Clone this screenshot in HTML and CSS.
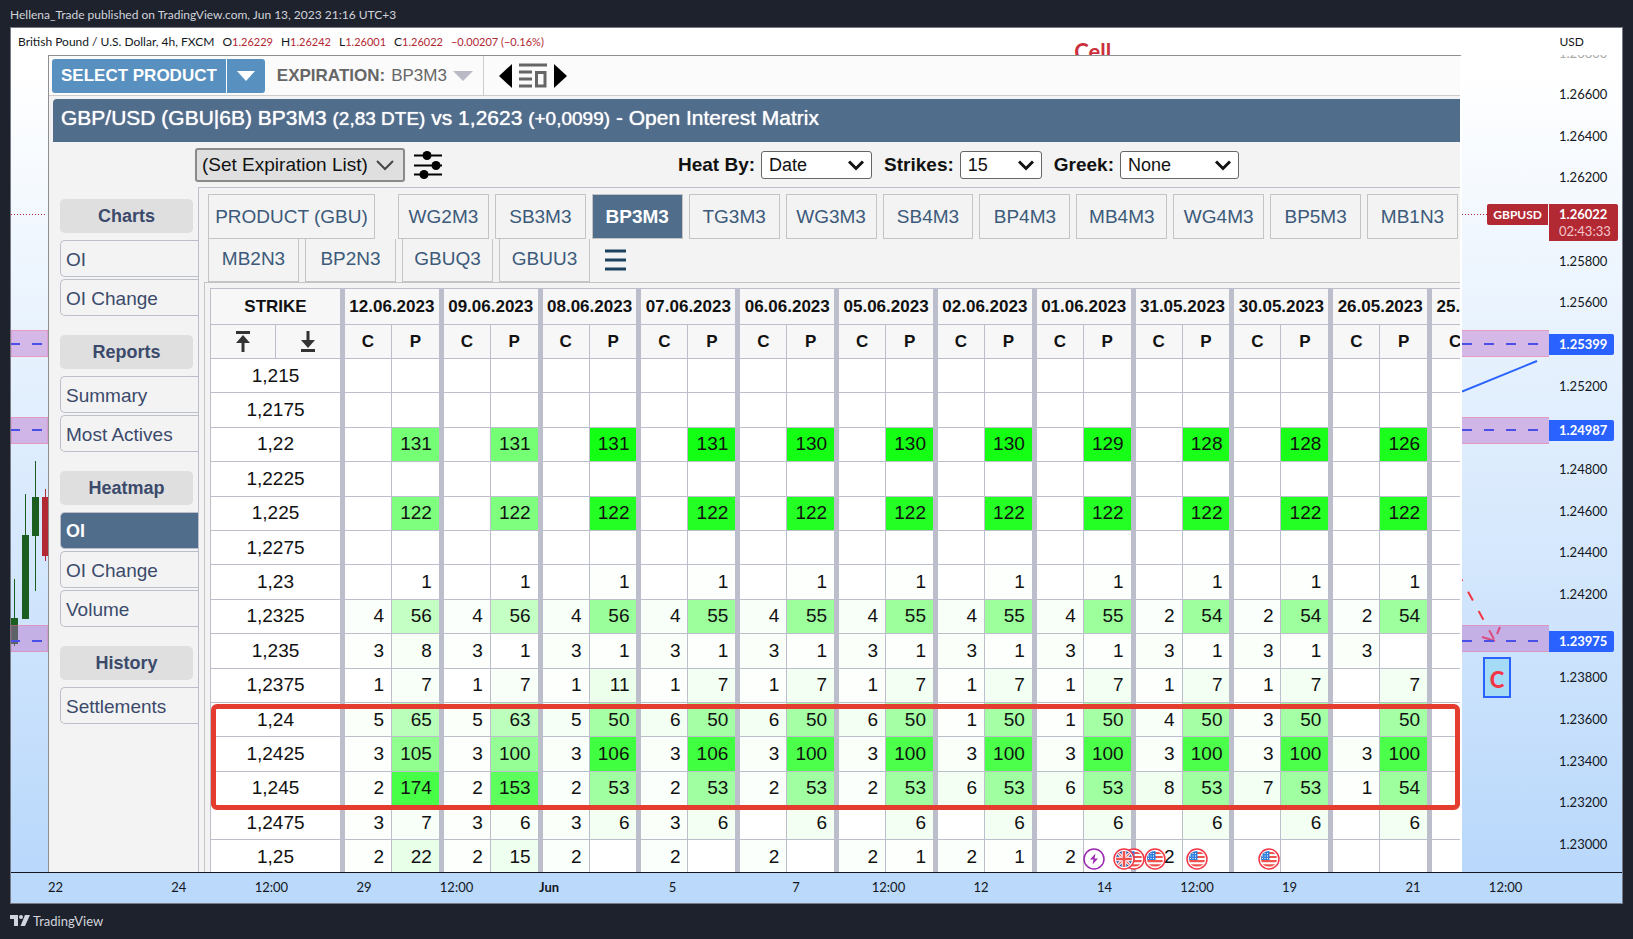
FILE: index.html
```
<!DOCTYPE html>
<html lang="en">
<head>
    <meta charset="UTF-8">
    <meta name="viewport" content="width=device-width, initial-scale=1.0">
    <title>GBPUSD - Open Interest Matrix</title>
    <link rel="stylesheet" href="styles.css">
</head>
<body>
    <!-- shared icons -->
    <svg class="sprite" aria-hidden="true">
        <symbol id="chevron" viewBox="0 0 16 12"><path d="M1 2.5 8 9.5 15 2.5" fill="none" stroke="currentColor" stroke-width="3"/></symbol>
        <symbol id="us" viewBox="0 0 22 22">
            <circle cx="11" cy="11" r="10" fill="#fff" stroke="#f23645" stroke-width="1.5"/>
            <clipPath id="disc"><circle cx="11" cy="11" r="8"/></clipPath>
            <g clip-path="url(#disc)">
                <path d="M2 5h18M2 9h18M2 13.2h18M2 17.4h18" stroke="#ef5350" stroke-width="2.2"/>
                <path d="M2 2h9.500v10H2z" fill="#2f7fe0"/>
                <path d="M4 5.500h7M4 8h7M4 10.500h7" stroke="#fff" stroke-width="1" stroke-dasharray="1 1.500"/>
            </g>
        </symbol>
        <symbol id="uk" viewBox="0 0 22 22">
            <circle cx="11" cy="11" r="10" fill="#fff" stroke="#f23645" stroke-width="1.5"/>
            <g clip-path="url(#disc)">
                <path d="M2 2h18v18H2z" fill="#1e4fa3"/>
                <path d="M3 3l16 16M19 3 3 19" stroke="#fff" stroke-width="3.200"/>
                <path d="M3 3l16 16M19 3 3 19" stroke="#ef5350" stroke-width="1.200"/>
                <path d="M11 2v18M2 11h18" stroke="#fff" stroke-width="4.600"/>
                <path d="M11 2v18M2 11h18" stroke="#ef5350" stroke-width="2.600"/>
            </g>
        </symbol>
    </svg>

    <header class="published">Hellena_Trade published on TradingView.com, Jun 13, 2023 21:16 UTC+3</header>

    <main class="frame">
        <div class="legend">
            <span>British Pound / U.S. Dollar, 4h, FXCM</span>
            <span>O<b>1.26229</b></span>
            <span>H<b>1.26242</b></span>
            <span>L<b>1.26001</b></span>
            <span>C<b>1.26022</b></span>
            <span><b>−0.00207 (−0.16%)</b></span>
            <span class="currency">USD</span>
            <span class="note">Cell</span>
        </div>

        <div class="chart">
            <svg class="plot-left" aria-hidden="true">
                <path d="M0 159.500h36" stroke="#b22833" stroke-dasharray="1 2"/>
                <path d="M3.500 524v67" stroke="#1b5e20"/>
                <path d="M0 563h7v26H0z" fill="#1b5e20"/>
                <g class="zone">
                    <path d="M0 275.500h37v26H0zM0 362.500h37v26H0zM0 570.500h37v26H0z"/>
                </g>
                <path d="M-1 289h38M-1 375h38M-1 586h38" class="level"/>
                <path d="M14.500 439v125M24.500 406v130" stroke="#1b5e20"/>
                <path d="M11 480h7v84h-7zM21 442h7v39h-7z" fill="#1b5e20"/>
                <path d="M34.500 434v72" stroke="#b22833"/>
                <path d="M31 442h7v59h-7z" fill="#b22833"/>
            </svg>

            <section class="panel">
                <div class="topbar">
                    <div class="split">
                        <button class="split-main">SELECT PRODUCT</button>
                        <button class="split-arrow" aria-label="Product list"><svg width="18" height="10" viewBox="0 0 18 10"><path d="M0 0h18L9 10z" fill="#fff"/></svg></button>
                    </div>
                    <button class="expiration"><strong>EXPIRATION:</strong> BP3M3 <svg width="20" height="10" viewBox="0 0 20 10"><path d="M0 0h20L10 10z" fill="#b9bac6"/></svg></button>
                    <div class="stepper">
                        <button aria-label="Previous"><svg width="13" height="24" viewBox="0 0 13 24"><path d="M13 0v24L0 12z"/></svg></button>
                        <button aria-label="List"><svg width="28" height="25" viewBox="0 0 28 25"><path d="M0 2h28M0 9h13M0 16h13M0 23h13M17.500 9.500h8.500V23h-8.500z" fill="none" stroke="#666" stroke-width="3"/></svg></button>
                        <button aria-label="Next"><svg width="13" height="24" viewBox="0 0 13 24"><path d="M0 0v24l13-12z"/></svg></button>
                    </div>
                </div>

                <h1 class="title">GBP/USD (GBU|6B) BP3M3 <small>(2,83 DTE)</small> vs 1,2623 <small>(+0,0099)</small> - Open Interest Matrix</h1>

                <div class="filters">
                    <button class="set-list">(Set Expiration List) <svg width="18" height="12" viewBox="0 0 18 12"><path d="M1 2l8 8 8-8" fill="none" stroke="#444" stroke-width="2"/></svg></button>
                    <button class="sliders" aria-label="Settings"><svg width="28" height="28" viewBox="0 0 28 28"><path d="M0 4.500h28M0 14.500h28M0 23.500h28" stroke="#000" stroke-width="2"/><circle cx="13" cy="4.500" r="4.500"/><circle cx="22" cy="14.500" r="4.500"/><circle cx="10" cy="23.500" r="4.500"/></svg></button>
                    <div class="selects">
                        <label for="heat">Heat By:</label>
                        <span class="select heat"><select id="heat"><option>Date</option></select><svg><use href="#chevron"/></svg></span>
                        <label for="strikes">Strikes:</label>
                        <span class="select strikes"><select id="strikes"><option>15</option></select><svg><use href="#chevron"/></svg></span>
                        <label for="greek">Greek:</label>
                        <span class="select greek"><select id="greek"><option>None</option></select><svg><use href="#chevron"/></svg></span>
                    </div>
                </div>

                <div class="workspace">
                    <nav class="side">
                        <h2>Charts</h2>
                        <a href="#">OI</a>
                        <a href="#">OI Change</a>
                        <h2>Reports</h2>
                        <a href="#">Summary</a>
                        <a href="#">Most Actives</a>
                        <h2>Heatmap</h2>
                        <a href="#" class="active">OI</a>
                        <a href="#">OI Change</a>
                        <a href="#">Volume</a>
                        <h2>History</h2>
                        <a href="#">Settlements</a>
                    </nav>

                    <div class="content">
                        <div class="tabs">
                            <button class="product">PRODUCT (GBU)</button>
                            <button>WG2M3</button>
                            <button>SB3M3</button>
                            <button class="active">BP3M3</button>
                            <button>TG3M3</button>
                            <button>WG3M3</button>
                            <button>SB4M3</button>
                            <button>BP4M3</button>
                            <button>MB4M3</button>
                            <button>WG4M3</button>
                            <button>BP5M3</button>
                            <button>MB1N3</button>
                        </div>
                        <div class="tabs second">
                            <button>MB2N3</button>
                            <button>BP2N3</button>
                            <button>GBUQ3</button>
                            <button>GBUU3</button>
                            <button class="menu" aria-label="Menu"><svg width="21" height="22" viewBox="0 0 21 22"><path d="M0 2h21M0 11h21M0 20h21" stroke="#1c425f" stroke-width="3"/></svg></button>
                        </div>
                        <div class="matrix">
                            <table>
                                <colgroup id="cols"><col class="half"><col class="half"></colgroup>
                                <thead>
                                    <tr id="dates"><th colspan="2">STRIKE</th></tr>
                                    <tr id="sides">
                                        <th><svg width="14" height="21" viewBox="0 0 14 21"><path d="M0 1.500h14M7 21V9" stroke="#333" stroke-width="3"/><path d="M0 12 7 4l7 8z" fill="#333"/></svg></th>
                                        <th><svg width="14" height="21" viewBox="0 0 14 21"><path d="M0 19.500h14M7 0v12" stroke="#333" stroke-width="3"/><path d="M0 9l7 8 7-8z" fill="#333"/></svg></th>
                                    </tr>
                                </thead>
                                <tbody id="rows"></tbody>
                            </table>
                            <div class="highlight"></div>
                        </div>
                    </div>
                </div>
            </section>

            <div class="plot-right">
                <svg aria-hidden="true">
                    <path d="M0 159.500h26" stroke="#b22833" stroke-dasharray="1 2"/>
                    <path d="M0 336.500 75 306" stroke="#2962ff" stroke-width="2"/>
                    <path d="M-3 520 33 586" stroke="#f23645" stroke-width="2" stroke-dasharray="10 12" stroke-dashoffset="3"/>
                    <path d="M20 582l13 4M38 572l-3 7" stroke="#f23645" stroke-width="2"/>
                    <g class="zone">
                        <path d="M-1 275.500h89v26H-1zM-1 362.500h89v26H-1zM-1 570.500h89v26H-1z"/>
                    </g>
                    <path d="M0 289h87M0 375h87M0 586h87" class="level"/>
                </svg>
                <span class="tag symbol">GBPUSD</span>
                <span class="wave">C</span>
            </div>

            <div class="prices">
                <span class="faded">1.26800</span>
                <span>1.26600</span>
                <span>1.26400</span>
                <span>1.26200</span>
                <span></span>
                <span>1.25800</span>
                <span>1.25600</span>
                <span></span>
                <span>1.25200</span>
                <span></span>
                <span>1.24800</span>
                <span>1.24600</span>
                <span>1.24400</span>
                <span>1.24200</span>
                <span></span>
                <span>1.23800</span>
                <span>1.23600</span>
                <span>1.23400</span>
                <span>1.23200</span>
                <span>1.23000</span>
                <span class="tag last">1.26022<small>02:43:33</small></span>
                <span class="tag level-a">1.25399</span>
                <span class="tag level-b">1.24987</span>
                <span class="tag level-c">1.23975</span>
            </div>
        </div>

        <!-- economic calendar events above the time scale -->
        <div class="events">
            <svg style="left: 67.2%" viewBox="0 0 22 22"><circle cx="11" cy="11" r="10" fill="#fff" stroke="#9c27b0" stroke-width="1.500"/><path d="M12.500 5.500 7 11.500h3.500L9.500 16.500 15 10.500h-3.500z" fill="#9c27b0"/></svg>
            <svg style="left: 69.7%"><use href="#us"/></svg>
            <svg style="left: 69.1%"><use href="#uk"/></svg>
            <svg style="left: 71%"><use href="#us"/></svg>
            <svg style="left: 73.6%"><use href="#us"/></svg>
            <svg style="left: 78.1%"><use href="#us"/></svg>
        </div>

        <div class="times" id="times"></div>
    </main>

    <footer class="brand">
        <svg width="20" height="11" viewBox="0 0 20 11" fill="#d1d4dc"><path d="M0 0h8v11H4V4H0z"/><circle cx="11" cy="2" r="2"/><path d="M15 0h5l-5 11h-4.500z"/></svg>
        TradingView
    </footer>

    <script src="script.js"></script>
</body>
</html>
```
FILE: styles.css
```
:root {
    --dark: #1e222d;
    --steel: #506d8b;
    --line: #bcbfcb;
    --panel: #f3f3f3;
    --red: #b22833;
    --blue: #2962ff;
}

* {
    box-sizing: border-box;
}

body {
    margin: 0;
    height: 100vh;
    display: flex;
    flex-direction: column;
    background: var(--dark);
    color: #131722;
    font-family: Lato, sans-serif;
    overflow: hidden;
}

button {
    font: inherit;
    color: inherit;
    background: none;
    border: none;
    padding: 0;
    cursor: pointer;
}

svg {
    display: block;
    flex: none;
}

.sprite {
    position: absolute;
    width: 0;
    height: 0;
}

.published {
    height: 27px;
    padding-left: 10px;
    line-height: 29px;
    font-size: 12px;
    color: #d1d4dc;
}

.frame {
    flex: 1;
    min-height: 0;
    margin: 0 10px;
    border: 1px solid #787b86;
    display: flex;
    flex-direction: column;
    position: relative;
    background: linear-gradient(#fff 5%, #b9d8fb 96%);
}

.legend {
    height: 27px;
    flex: none;
    display: flex;
    gap: 8px;
    padding: 0 38px 0 7px;
    line-height: 28px;
    font-size: 12px;
    position: relative;
    overflow: hidden;
}

.legend b {
    font-size: 11px;
    font-weight: normal;
    color: var(--red);
}

.currency {
    margin-left: auto;
}

.note {
    position: absolute;
    left: 66%;
    top: 10px;
    font-size: 22px;
    font-weight: bold;
    color: #cc2f3c;
}

.chart {
    flex: 1;
    min-height: 0;
    display: flex;
    border-bottom: 1px solid #131722;
}

/* chart strips either side of the panel */

.plot-left {
    width: 37px;
    height: 100%;
    overflow: hidden;
}

.plot-right {
    width: 87px;
    flex: none;
    position: relative;
}

.plot-right > svg {
    width: 100%;
    height: 100%;
}

.zone {
    fill: rgba(186, 104, 200, 0.42);
    stroke: rgba(240, 98, 146, 0.5);
}

.level {
    fill: none;
    stroke: #4a4fe8;
    stroke-width: 2;
    stroke-dasharray: 10 12;
}

.tag {
    position: absolute;
    color: #fff;
    font-size: 13px;
    font-weight: bold;
    line-height: 21px;
    border-radius: 0 2px 2px 0;
}

.symbol {
    right: 1px;
    top: 149px;
    padding: 0 6px;
    font-size: 12px;
    background: var(--red);
    border-radius: 2px 0 0 2px;
}

.wave {
    position: absolute;
    left: 21px;
    top: 602px;
    width: 28px;
    height: 41px;
    border: 2px solid var(--blue);
    background: #a5dbf4;
    color: #f23645;
    font-size: 22px;
    font-weight: 900;
    line-height: 41px;
    text-align: center;
}

.prices {
    width: 73px;
    flex: none;
    padding: 31px 0 20px 10px;
    display: flex;
    flex-direction: column;
    justify-content: space-between;
    position: relative;
    overflow: hidden;
    font-size: 13px;
    line-height: 16px;
}

.prices > span {
    min-height: 16px;
}

.prices .faded {
    position: absolute;
    top: -10px;
    color: #aaa;
}

.prices .tag {
    left: 0;
    padding: 0 7px 0 10px;
    background: var(--blue);
}

.prices .last {
    top: 149px;
    height: 37px;
    background: var(--red);
}

.last small {
    display: block;
    font-size: 13px;
    font-weight: normal;
    line-height: 12px;
    color: #f3c6ca;
}

.level-a {
    top: 279px;
}

.level-b {
    top: 365px;
}

.level-c {
    top: 576px;
}

/* open interest panel */

.panel {
    flex: 1;
    min-width: 0;
    display: flex;
    flex-direction: column;
    overflow: hidden;
    background: var(--panel);
    border-top: 1px solid #8f8f8f;
    border-left: 1px solid #8f8f8f;
    border-right: 2px solid #fff;
    font-family: "Liberation Sans", Arial, sans-serif;
    font-size: 19px;
    color: #111;
}

.topbar {
    height: 40px;
    flex: none;
    display: flex;
    align-items: center;
    padding-left: 3px;
    background: #fbfbfb;
    border-bottom: 1px solid #ccc;
    font-size: 17px;
}

.split {
    display: flex;
    gap: 1px;
    height: 34px;
    color: #fff;
}

.split-main,
.split-arrow {
    background: #5890bf;
    border-radius: 3px 0 0 3px;
    padding: 0 9px;
    font-weight: bold;
}

.split-arrow {
    width: 38px;
    padding-left: 10px;
    border-radius: 0 3px 3px 0;
}

.expiration {
    display: flex;
    align-items: center;
    gap: 6px;
    align-self: stretch;
    padding: 0 10px 0 12px;
    border-right: 1px solid #ccc;
    color: #666;
}

.stepper {
    display: flex;
    align-items: center;
    gap: 7px;
    padding-left: 15px;
}

.title {
    flex: none;
    height: 43px;
    margin: 3px 0 0 4px;
    padding-left: 8px;
    background: var(--steel);
    border-radius: 4px 0 0 0;
    color: #fff;
    font-size: 21px;
    font-weight: normal;
    line-height: 37px;
    text-shadow: 0 0 1px #fff;
    white-space: nowrap;
}

.title small {
    font-size: 19px;
}

.filters {
    height: 45px;
    flex: none;
    display: flex;
    align-items: center;
    padding-left: 146px;
}

.set-list {
    display: flex;
    align-items: center;
    gap: 8px;
    height: 34px;
    padding: 0 9px 0 5px;
    border: 2px solid #8a8a8a;
    border-radius: 3px;
    background: #dfdfdf;
    white-space: nowrap;
}

.sliders {
    margin-left: 9px;
}

.selects {
    display: flex;
    align-items: center;
    margin: 0 221px 0 auto;
}

.selects label {
    font-weight: bold;
    margin: 0 6px 0 12px;
}

.select {
    position: relative;
}

.select select {
    appearance: none;
    width: 100%;
    height: 28px;
    padding: 0 7px;
    border: 1px solid #666;
    border-radius: 3px;
    background: #fff;
    font: 18px "Liberation Sans", Arial, sans-serif;
    color: #111;
}

.select svg {
    position: absolute;
    right: 8px;
    top: 8px;
    width: 16px;
    height: 12px;
    pointer-events: none;
}

.heat {
    width: 111px;
}

.strikes {
    width: 82px;
}

.greek {
    width: 119px;
}

.workspace {
    flex: 1;
    min-height: 0;
    display: flex;
}

.side {
    width: 149px;
    flex: none;
    padding: 12px 0 0 11px;
    display: flex;
    flex-direction: column;
    gap: 2px;
    color: #3b4a6b;
}

.side h2 {
    margin: 17px 5px 5px 0;
    height: 34px;
    border-radius: 5px;
    background: #dfdfdf;
    font-size: 18px;
    line-height: 35px;
    text-align: center;
}

.side h2:first-child {
    margin-top: 0;
}

.side a {
    height: 37px;
    padding-left: 5px;
    border: 1px solid var(--line);
    border-right: none;
    border-radius: 5px 0 0 5px;
    line-height: 37px;
    color: inherit;
    text-decoration: none;
}

.side .active {
    background: var(--steel);
    color: #fff;
    font-size: 18px;
    font-weight: bold;
}

.content {
    flex: 1;
    min-width: 0;
    display: flex;
    flex-direction: column;
    padding-top: 6px;
    border-top: 1px solid var(--line);
    border-left: 1px solid var(--line);
}

.tabs {
    height: 45px;
    flex: none;
    display: flex;
    gap: 6px;
    padding: 0 2px 0 9px;
    color: #3c5a7a;
}

.tabs button {
    flex: 1;
    border: 1px solid #c4c4c4;
    white-space: nowrap;
}

.tabs .product {
    flex: none;
    width: 167px;
    margin-right: 17px;
}

.tabs .active {
    background: var(--steel);
    color: #fff;
    font-weight: bold;
}

.second {
    height: 43px;
}

.second button {
    flex: none;
    width: 91px;
    border-top: none;
    padding-bottom: 2px;
}

.second .menu {
    width: 21px;
    margin-left: 9px;
    border: none;
}

.matrix {
    flex: 1;
    min-height: 0;
    margin-left: 5px;
    padding: 5px 0 0 5px;
    border-top: 1px solid #c4c4c4;
    border-left: 1px solid #c4c4c4;
    position: relative;
    overflow: hidden;
}

.matrix table {
    width: calc(100% + 67px);
    height: 587px;
    table-layout: fixed;
    border-collapse: separate;
    border-spacing: 0;
    border-top: 1px solid var(--line);
    border-left: 1px solid var(--line);
    background: #fff;
}

.half {
    width: 65px;
}

.call {
    width: 51px;
}

.matrix th,
.matrix td {
    height: 34px;
    padding: 0 7px 0 0;
    border-right: 1px solid var(--line);
    border-bottom: 1px solid var(--line);
    text-align: right;
    white-space: nowrap;
}

.matrix th {
    height: 36px;
    padding: 0;
    background: #f7f7f7;
    font-size: 17px;
    text-align: center;
}

.matrix tr + tr th {
    height: 34px;
}

.matrix th svg {
    margin: 0 auto;
}

.matrix .group {
    border-left: 4px solid var(--line);
}

.matrix .strike {
    padding: 0;
    text-align: center;
}

/* 1,24 - 1,245 */
.highlight {
    position: absolute;
    left: 6px;
    right: 0;
    top: 421px;
    height: 106px;
    border: 5px solid #e53c30;
    border-radius: 6px;
}

.events {
    position: absolute;
    left: 0;
    right: 0;
    bottom: 33px;
    height: 22px;
}

.events svg {
    position: absolute;
    width: 22px;
    height: 22px;
    margin-left: -11px;
}

.times {
    height: 30px;
    flex: none;
    padding: 0 101px 0 29px;
    display: grid;
    grid-template-columns: repeat(48, minmax(0, 1fr));
    background: #bbd9fb;
    font-size: 13px;
    line-height: 29px;
}

.times span {
    display: flex;
    justify-content: center;
    grid-row: 1;
}

.times .month {
    font-weight: bold;
}

.brand {
    height: 35px;
    flex: none;
    display: flex;
    align-items: center;
    gap: 3px;
    padding: 0 0 2px 10px;
    font-size: 13px;
    color: #d1d4dc;
}
```
FILE: script.js
```
const dates = ['12.06.2023', '09.06.2023', '08.06.2023', '07.06.2023', '06.06.2023', '05.06.2023',
    '02.06.2023', '01.06.2023', '31.05.2023', '30.05.2023', '26.05.2023', '25.05.2023'];

// strike, calls, puts
const rows = [
    ['1,215', [], []],
    ['1,2175', [], []],
    ['1,22', [], [131, 131, 131, 131, 130, 130, 130, 129, 128, 128, 126]],
    ['1,2225', [], []],
    ['1,225', [], [122, 122, 122, 122, 122, 122, 122, 122, 122, 122, 122]],
    ['1,2275', [], []],
    ['1,23', [], [1, 1, 1, 1, 1, 1, 1, 1, 1, 1, 1]],
    ['1,2325', [4, 4, 4, 4, 4, 4, 4, 4, 2, 2, 2], [56, 56, 56, 55, 55, 55, 55, 55, 54, 54, 54]],
    ['1,235', [3, 3, 3, 3, 3, 3, 3, 3, 3, 3, 3], [8, 1, 1, 1, 1, 1, 1, 1, 1, 1]],
    ['1,2375', [1, 1, 1, 1, 1, 1, 1, 1, 1, 1], [7, 7, 11, 7, 7, 7, 7, 7, 7, 7, 7]],
    ['1,24', [5, 5, 5, 6, 6, 6, 1, 1, 4, 3], [65, 63, 50, 50, 50, 50, 50, 50, 50, 50, 50]],
    ['1,2425', [3, 3, 3, 3, 3, 3, 3, 3, 3, 3, 3], [105, 100, 106, 106, 100, 100, 100, 100, 100, 100, 100]],
    ['1,245', [2, 2, 2, 2, 2, 2, 6, 6, 8, 7, 1], [174, 153, 53, 53, 53, 53, 53, 53, 53, 53, 54]],
    ['1,2475', [3, 3, 3, 3], [7, 6, 6, 6, 6, 6, 6, 6, 6, 6, 6]],
    ['1,25', [2, 2, 2, 2, 2, 2, 2, 2, 2], [22, 15, '', '', '', 1, 1]]
];

function heat(value, day) {
    const scale = day < 2 ? 0.00414 : 0.00705;
    const c = Math.round(255 * (1 - value * scale));
    return `rgb(${c}, 255, ${c})`;
}

function cell(value, day, group) {
    const cls = group ? ' class="group"' : '';
    if (!value) return `<td${cls}></td>`;
    return `<td${cls} style="background: ${heat(value, day)}">${value}</td>`;
}

dates.forEach(date => {
    document.getElementById('cols').innerHTML += '<col class="call"><col>';
    document.getElementById('dates').innerHTML += `<th class="group" colspan="2">${date}</th>`;
    document.getElementById('sides').innerHTML += '<th class="group">C</th><th>P</th>';
});

document.getElementById('rows').innerHTML = rows.map(([strike, calls, puts]) =>
    `<tr><td class="strike" colspan="2">${strike}</td>` +
    dates.map((d, i) => cell(calls[i], i, true) + cell(puts[i], i, false)).join('') +
    '</tr>').join('');

// label and its column on the time scale
const times = [['22', 1], ['24', 5], ['12:00', 8], ['29', 11], ['12:00', 14], ['Jun', 17], ['5', 21], ['7', 25],
    ['12:00', 28], ['12', 31], ['14', 35], ['12:00', 38], ['19', 41], ['21', 45], ['12:00', 48]];

document.getElementById('times').innerHTML = times.map(([label, col]) =>
    `<span${label === 'Jun' ? ' class="month"' : ''} style="grid-column: ${col}">${label}</span>`).join('');
```
